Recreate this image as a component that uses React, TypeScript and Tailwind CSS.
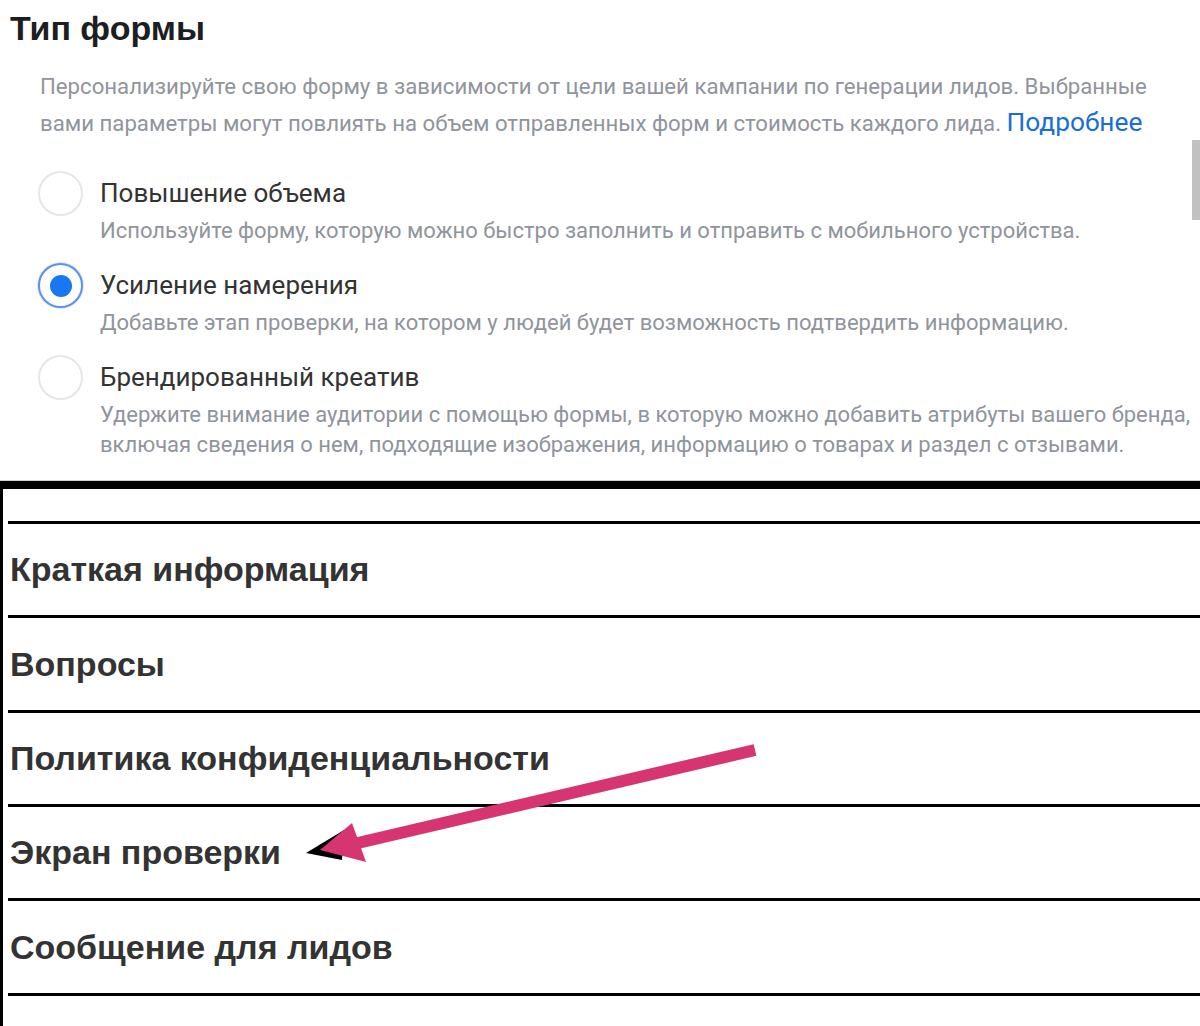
import * as React from "react"

const options = [
  {
    title: "Повышение объема",
    desc: "Используйте форму, которую можно быстро заполнить и отправить с мобильного устройства.",
    checked: false,
  },
  {
    title: "Усиление намерения",
    desc: "Добавьте этап проверки, на котором у людей будет возможность подтвердить информацию.",
    checked: true,
  },
  {
    title: "Брендированный креатив",
    desc: "Удержите внимание аудитории с помощью формы, в которую можно добавить атрибуты вашего бренда, включая сведения о нем, подходящие изображения, информацию о товарах и раздел с отзывами.",
    checked: false,
  },
]

const sections = [
  { label: "Краткая информация", h: "h-[91px]" },
  { label: "Вопросы", h: "h-[92px]" },
  { label: "Политика конфиденциальности", h: "h-[91px]" },
  { label: "Экран проверки", h: "h-[91px]" },
  { label: "Сообщение для лидов", h: "h-[92px]" },
]

function Radio({ checked }: { checked: boolean }) {
  if (checked) {
    return (
      <div className="w-[45px] h-[45px] rounded-full border-2 border-[#5b93ea] bg-white flex items-center justify-center shadow-[0_0_0_1px_#dbe7fb]">
        <div className="w-[22px] h-[22px] rounded-full bg-[#1877f2]" />
      </div>
    )
  }
  return <div className="w-[45px] h-[45px] rounded-full border-2 border-[#e4e6eb] bg-white" />
}

export default function App() {
  return (
    <div className="relative w-[1200px] h-[1026px] overflow-hidden bg-white">
      {/* Form type */}
      <section className="pt-[8px] font-['Roboto',Arial,sans-serif]">
        <h1 className="pl-[10px] text-[34px] font-bold leading-[40px] text-[#1c1e21] font-['Liberation_Sans',Arial,sans-serif]">
          Тип формы
        </h1>
        <p className="mt-[20px] pl-[40px] pr-[20px] text-[22.2px] leading-[36px] text-[#90949c]">
          Персонализируйте свою форму в зависимости от цели вашей кампании по генерации лидов. Выбранные
          <br />
          вами параметры могут повлиять на объем отправленных форм и стоимость каждого лида.{" "}
          <a className="text-[26.3px] text-[#1a6ed8]">Подробнее</a>
        </p>

        <div className="mt-[34px] flex flex-col gap-[21px]">
          {options.map((o) => (
            <div key={o.title} className="flex">
              <div className="w-[100px] pl-[38px] shrink-0">
                <div className="-mt-[4px]">
                  <Radio checked={o.checked} />
                </div>
              </div>
              <div className="flex-1">
                <div className="text-[26px] leading-[36px] text-[#333]">{o.title}</div>
                <div className="mt-[5px] text-[22px] leading-[30px] text-[#90949c]">{o.desc}</div>
              </div>
            </div>
          ))}
        </div>
      </section>

      <div className="absolute right-0 top-[140px] w-[8px] h-[80px] bg-[#c1c1c1]" />

      {/* Sections */}
      <section className="mt-[20px] border-t border-[#d0d0d0]">
        <div className="border-t-[8px] border-l-[3px] border-black pl-[5px] pt-[32px] font-['Liberation_Sans',Arial,sans-serif]">
          {sections.map((s) => (
            <div key={s.label}>
              <div className="h-[3px] bg-black" />
              <div className={`${s.h} flex items-center pl-[2px] text-[34px] font-bold text-[#333]`}>
                {s.label}
              </div>
            </div>
          ))}
          <div className="h-[3px] bg-black" />
          <div className="h-[40px]" />
        </div>
      </section>

      {/* Annotation arrow */}
      <svg className="absolute inset-0 pointer-events-none" width="1200" height="1026" viewBox="0 0 1200 1026">
        <polygon points="306,853 344,830 342,860" fill="#000" />
        <line x1="755" y1="750" x2="345" y2="846" stroke="#d63571" strokeWidth="12" />
        <polygon points="320,850 352,823 366,862" fill="#d63571" />
      </svg>
    </div>
  )
}
